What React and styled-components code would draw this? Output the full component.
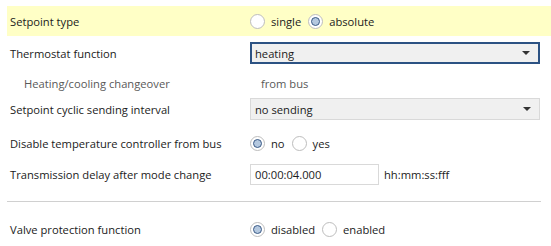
import React from 'react';
import styled, { createGlobalStyle } from 'styled-components';

const GlobalStyle = createGlobalStyle`
  html, body {
    margin: 0;
    padding: 0;
    background: #fff;
  }
  body {
    font-family: "Open Sans", "Noto Sans", "Liberation Sans", sans-serif;
    font-size: 11.2px;
    color: #1b1b1b;
  }
`;

const Page = styled.div`
  width: 551px;
  height: 246px;
  padding-top: 6px;
  padding-left: 7px;
  box-sizing: border-box;
  overflow: hidden;
`;

const Row = styled.div`
  display: grid;
  grid-template-columns: 243px 1fr;
  align-items: center;
  height: ${(p) => p.$h}px;
  margin-top: ${(p) => p.$mt || 0}px;
  background: ${(p) => (p.$highlight ? '#ffffc6' : 'transparent')};
`;

const Label = styled.div`
  padding-left: ${(p) => (p.$sub ? 17 : 3)}px;
  color: ${(p) => (p.$sub ? '#595959' : '#1b1b1b')};
  white-space: nowrap;
`;

const Value = styled.div`
  display: flex;
  align-items: center;
  color: ${(p) => (p.$muted ? '#595959' : '#1b1b1b')};
  padding-left: ${(p) => p.$pl || 0}px;
`;

const Select = styled.div`
  width: 290px;
  height: 22px;
  box-sizing: border-box;
  display: flex;
  align-items: center;
  justify-content: space-between;
  padding: 0 8px 0 ${(p) => (p.$focused ? 3 : 4)}px;
  background: #f0f0f0;
  border: ${(p) => (p.$focused ? '2px solid #2c5283' : '1px solid #d9d9d9')};
`;

const Arrow = styled.span`
  width: 0;
  height: 0;
  border-left: 4px solid transparent;
  border-right: 4px solid transparent;
  border-top: 4px solid #333;
`;

const RadioGroup = styled.div`
  display: flex;
  align-items: center;
  gap: 7px;
`;

const RadioOption = styled.label`
  display: flex;
  align-items: center;
  gap: 6px;
`;

const Circle = styled.span`
  width: 15px;
  height: 15px;
  box-sizing: border-box;
  border-radius: 50%;
  border: 1px solid #bdbdbd;
  background: #fff;
  display: flex;
  align-items: center;
  justify-content: center;

  &::after {
    content: '';
    display: ${(p) => (p.$checked ? 'block' : 'none')};
    width: 9px;
    height: 9px;
    box-sizing: border-box;
    border-radius: 50%;
    border: 1px solid #3a5a86;
    background: #b4c8df;
  }
`;

const TimeBox = styled.div`
  width: 129px;
  height: 21px;
  box-sizing: border-box;
  border: 1px solid #d9d9d9;
  background: #fff;
  display: flex;
  align-items: center;
  padding-left: 4px;
`;

const Unit = styled.span`
  margin-left: 5px;
`;

const Separator = styled.div`
  height: 1px;
  background: #d0d0d0;
  margin-top: 13px;
  margin-right: 10px;
`;

const Radio = ({ checked, children }) => (
  <RadioOption>
    <Circle $checked={checked} />
    {children}
  </RadioOption>
);

const App = () => (
  <>
    <GlobalStyle />
    <Page>
      <Row $h={30} $highlight>
        <Label>Setpoint type</Label>
        <RadioGroup>
          <Radio>single</Radio>
          <Radio checked>absolute</Radio>
        </RadioGroup>
      </Row>
      <Row $h={34}>
        <Label>Thermostat function</Label>
        <Select $focused>
          heating
          <Arrow />
        </Select>
      </Row>
      <Row $h={26}>
        <Label $sub>Heating/cooling changeover</Label>
        <Value $muted $pl={11}>from bus</Value>
      </Row>
      <Row $h={26}>
        <Label>Setpoint cyclic sending interval</Label>
        <Select>
          no sending
          <Arrow />
        </Select>
      </Row>
      <Row $h={32} $mt={5}>
        <Label>Disable temperature controller from bus</Label>
        <RadioGroup>
          <Radio checked>no</Radio>
          <Radio>yes</Radio>
        </RadioGroup>
      </Row>
      <Row $h={27} $mt={2}>
        <Label>Transmission delay after mode change</Label>
        <Value>
          <TimeBox>00:00:04.000</TimeBox>
          <Unit>hh:mm:ss:fff</Unit>
        </Value>
      </Row>
      <Separator />
      <Row $h={28} $mt={13}>
        <Label>Valve protection function</Label>
        <RadioGroup>
          <Radio checked>disabled</Radio>
          <Radio>enabled</Radio>
        </RadioGroup>
      </Row>
    </Page>
  </>
);

export default App;
